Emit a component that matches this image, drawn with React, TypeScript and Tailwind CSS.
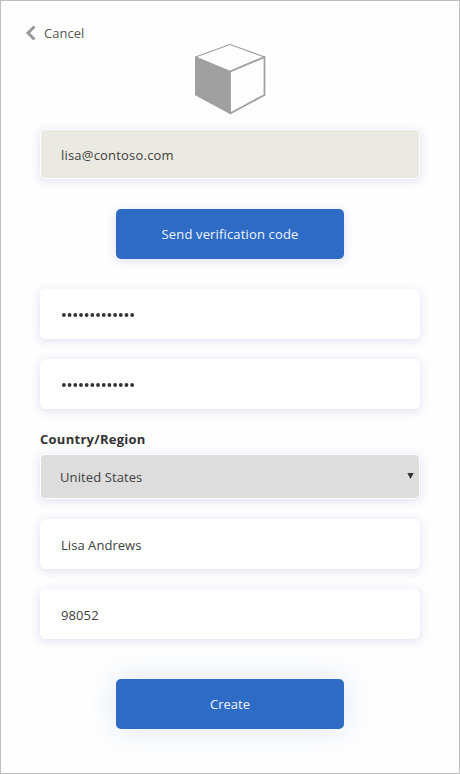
import type { ReactNode } from 'react';

const fieldShadow = 'shadow-[0_2px_10px_1px_rgba(60,50,180,0.13)]';

function Field({ children, className = 'bg-white' }: { children: ReactNode; className?: string }) {
  return (
    <div className={`flex h-[50px] w-full shrink-0 items-center rounded-[5px] border border-white pl-5 pt-px ${fieldShadow} ${className}`}>
      {children}
    </div>
  );
}

function PasswordDots() {
  return (
    <svg width="80" height="6" viewBox="0 0 80 6" fill="#333" className="ml-px" role="img" aria-label="Password">
      {Array.from({ length: 13 }, (_, i) => (
        <circle key={i} cx={1.9 + i * 5.69} cy="3" r="1.9" />
      ))}
    </svg>
  );
}

export default function App() {
  return (
    <main className="flex h-[774px] w-[460px] flex-col overflow-hidden border border-[#bfbfbf] bg-[#fefefe] px-[39px] font-['Open_Sans','Noto_Sans',sans-serif] text-[13px] leading-5 text-[#404040]">
      <button className="-ml-[15px] mt-[22px] flex h-5 shrink-0 items-center self-start text-[#555]">
        <svg width="11" height="16" viewBox="0 0 11 16" fill="none" stroke="#999" strokeWidth="3">
          <path d="M9.5 1.5 3 8 9.5 14.5" />
        </svg>
        <span className="ml-[8px] tracking-[0.03px]">Cancel</span>
      </button>
      <svg className="shrink-0 self-center" width="72" height="72" viewBox="0 0 72 72" fill="none" stroke="#a0a0a0" strokeLinejoin="round">
        <path d="M1.5 14 36 28.5V70.5L1.5 52Z" fill="#a0a0a0" strokeWidth="1" />
        <path d="M1.5 14 36 1.5 70.5 14 36 28.5Z" strokeWidth="1.2" />
        <path d="M36 28.5 70.5 14V52L36 70.5Z" strokeWidth="1.8" />
      </svg>
      <div className="mt-[14px] flex flex-col gap-5">
        <Field className="bg-[#eaeae2]"><span className="tracking-[0.2px]">lisa@contoso.com</span></Field>
        <button className={`my-[10px] h-[50px] w-[228px] self-center rounded-[5px] bg-[#2d6bc4] pb-px tracking-[0.15px] text-[#f2f6ff] ${fieldShadow}`}>
          Send verification code
        </button>
        <Field><PasswordDots /></Field>
        <Field><PasswordDots /></Field>
        <div className="flex flex-col">
          <span className="h-[25px] font-bold tracking-[0.27px] text-[#333]">Country/Region</span>
          <button className={`flex h-[45px] items-center justify-between rounded-[5px] border border-white bg-[#ddd] pl-[19px] pr-[5px] ${fieldShadow}`}>
            <span className="tracking-[0.1px]">United States</span>
            <svg width="7" height="7" viewBox="0 0 7 7" fill="#333"><path d="M0.3 0H6.7L3.5 6Z" /></svg>
          </button>
        </div>
        <Field><span className="tracking-[0.05px]">Lisa Andrews</span></Field>
        <Field><span className="tracking-[0.1px]">98052</span></Field>
        <button className="mt-5 h-[50px] w-[228px] self-center rounded-[5px] bg-[#2d6bc4] pb-px text-[#f2f6ff] shadow-[0_0_30px_rgba(45,80,200,0.15)]">
          Create
        </button>
      </div>
    </main>
  );
}
